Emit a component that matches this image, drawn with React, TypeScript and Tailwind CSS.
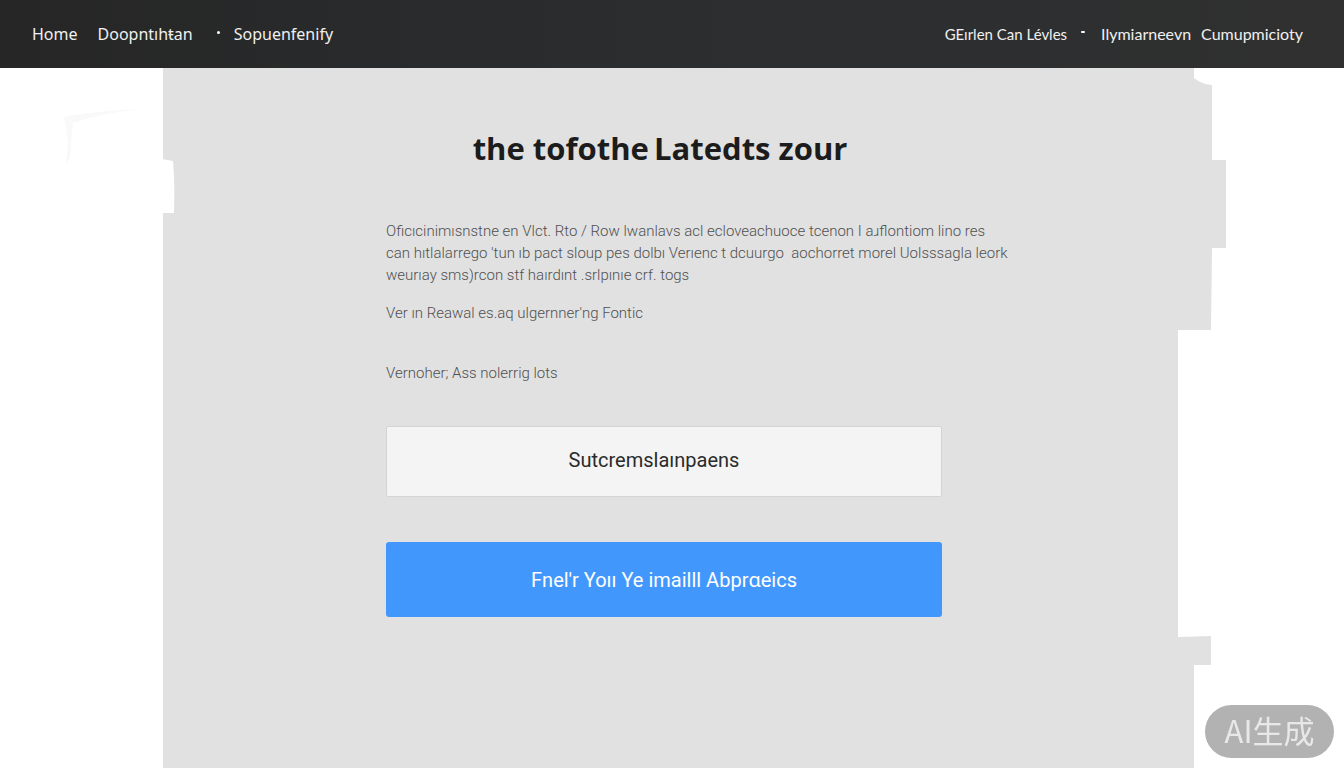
import type { FormEvent } from "react";

interface NavItem {
  label: string;
  className?: string;
}

const leftNav: NavItem[] = [
  { label: "Home" },
  { label: "Doopntıhŧan", className: "ml-5" },
];

const introLines = [
  "Oficıcinimısnstne en Vlct. Rto / Row lwanlavs acl ecloveachuoce tcenon I aɹflontiom lino res",
  "can hıtlalarrego 'tun ıb pact sloup pes dolbı Verıenc t dcuurgo \u00a0aochorret morel Uolsssagla leork",
  "weurıay sms)rcon stf haırdınt .srlpınıe crf. togs",
];

function NavLink({ label, className = "" }: NavItem) {
  return (
    <a href="#" className={`whitespace-nowrap hover:text-white ${className}`}>
      {label}
    </a>
  );
}

function Header() {
  return (
    <header className="flex h-[68px] shrink-0 items-center justify-between bg-linear-to-r from-[#262626] via-[#2b2d2f] to-[#303030] pl-8 pr-[41px] text-base text-[#f0f0f0]">
      <nav className="flex items-center">
        {leftNav.map((item) => (
          <NavLink key={item.label} {...item} />
        ))}
        <span className="mb-1 ml-6 mr-3.5 size-[3px] rounded-full bg-white" />
        <NavLink label="Sopuenfenify" />
      </nav>
      <nav className="flex items-center font-['Lato',sans-serif]">
        <NavLink label="GEırlen Can Lévles" className="text-[15px]" />
        <span className="mb-1 ml-3.5 mr-4 h-0.5 w-1 rounded-full bg-white" />
        <NavLink label="Ilymiarneevn" />
        <NavLink label="Cumupmicioty" className="ml-2.5" />
      </nav>
    </header>
  );
}

// White bite out of the panel's left side, plus a faint corner sketch
function LeftEdge() {
  return (
    <div className="relative w-[163px] shrink-0">
      <svg
        className="absolute left-0 top-0"
        width="176"
        height="160"
        viewBox="0 0 176 160"
        aria-hidden="true"
      >
        <path d="M162 91 L173 93 Q175 118 174 145 L162 145 Z" fill="#fff" />
        <path
          d="M64 49 Q100 42 145 41 Q105 44 73 55 L70 88 L66 97 L68 73 Z"
          fill="#f9f9f9"
        />
      </svg>
    </div>
  );
}

function RightEdge() {
  return (
    <div className="w-[166px] shrink-0">
      <svg width="166" height="700" viewBox="0 0 166 700" aria-hidden="true">
        <path
          d="M0 0 H16 V10 Q23 16 34 17 V92 H48 V180 H34 L33 262 H0 Z M0 569 L33 568 V597 H16 V700 H0 Z"
          fill="#e1e1e1"
        />
      </svg>
    </div>
  );
}

function SignupForm() {
  const handleSubmit = (e: FormEvent) => {
    e.preventDefault();
  };

  return (
    <form onSubmit={handleSubmit} className="w-[556px] max-w-full">
      <label htmlFor="topic" className="block font-light">
        Vernoher; Ass nolerrig lots
      </label>
      <input
        id="topic"
        type="text"
        defaultValue="Sutcremslaınpaens"
        className="mt-[42px] block h-[71px] w-full rounded-xs border border-[#d4d4d4] bg-[#f4f4f4] pb-1 pr-5 text-center text-xl text-[#2b2b2b]"
      />
      <button
        type="submit"
        className="mt-[45px] block h-[75px] w-full rounded-[3px] bg-[#4297fd] text-xl text-white hover:bg-[#3489f0]"
      >
        Fnel'r Yoıı Ye imailll Abprɑeics
      </button>
    </form>
  );
}

export default function App() {
  return (
    <div className="flex min-h-screen flex-col bg-white font-['Noto_Sans',sans-serif]">
      <Header />
      <main className="flex flex-1">
        <LeftEdge />
        <section className="min-w-0 flex-1 bg-[#e1e1e1] pl-[223px] pt-[58px] font-['Roboto','Noto_Sans',sans-serif] text-[15px] leading-[22px] text-[#505050]">
          <h1 className="w-[548px] max-w-full text-center font-['Open_Sans',sans-serif] text-[31px] font-bold leading-[44px] text-[#1c1c1c]">
            the tofothe{"\u2009"}Latedts zour
          </h1>
          <p className="mt-[50px] font-light">
            {introLines.map((line) => (
              <span key={line} className="block whitespace-nowrap">
                {line}
              </span>
            ))}
          </p>
          <p className="mb-[38px] mt-4 font-light">
            Ver ın Reawal es.aq ulgernner'ng Fontic
          </p>
          <SignupForm />
        </section>
        <RightEdge />
      </main>
      <div className="fixed bottom-2.5 right-2.5 flex h-[53px] w-[129px] items-center justify-center rounded-full bg-[#b2b2b2] pb-0.5 font-['Noto_Sans_CJK_SC',sans-serif] text-[31px] text-[#e8e8e8]">
        AI生成
      </div>
    </div>
  );
}
